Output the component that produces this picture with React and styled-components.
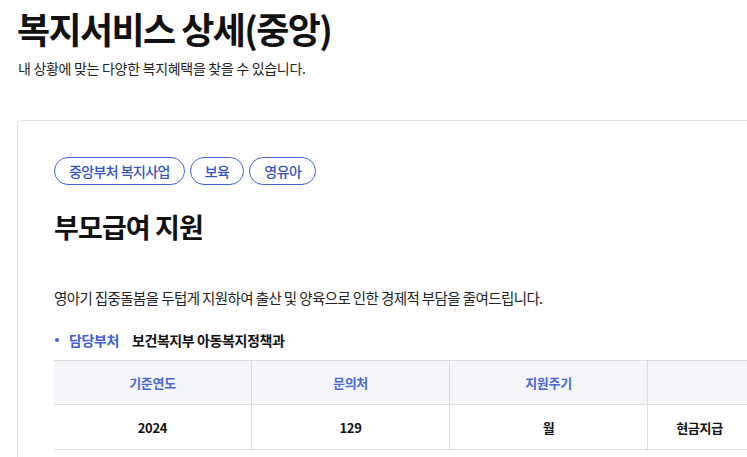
import React from "react";
import styled, { createGlobalStyle } from "styled-components";

const GlobalStyle = createGlobalStyle`
  body {
    margin: 0;
    background: #fff;
    font-family: "Noto Sans CJK KR", "Noto Sans", sans-serif;
    color: #111;
    overflow: hidden;
  }
`;

const Page = styled.main`
  padding: 4px 0 0 17px;
  width: 900px;
`;

const Title = styled.h1`
  margin: 0;
  font-size: 36px;
  font-weight: 700;
  line-height: 48px;
  letter-spacing: -1.6px;
`;

const Sub = styled.p`
  margin: 6px 0 0 1px;
  font-size: 14px;
  line-height: 20px;
  color: #222;
  letter-spacing: -0.3px;
`;

const Card = styled.section`
  margin-top: 42px;
  border: 1px solid #e0e0e0;
  border-radius: 5px;
  padding: 36px 36px 40px;
`;

const Tags = styled.div`
  display: flex;
  gap: 5px;
`;

const Tag = styled.span`
  display: inline-flex;
  align-items: center;
  height: 28px;
  padding: 0 14px;
  border: 1px solid #4263d8;
  border-radius: 14px;
  box-sizing: border-box;
  color: #3552c6;
  font-size: 14px;
  font-weight: 500;
  letter-spacing: -0.6px;
`;

const Heading = styled.h2`
  margin: 22px 0 0;
  font-size: 27px;
  font-weight: 700;
  line-height: 40px;
  letter-spacing: -0.9px;
`;

const Desc = styled.p`
  margin: 40px 0 0;
  font-size: 14.5px;
  line-height: 22px;
  color: #222;
  letter-spacing: -0.6px;
`;

const InfoRow = styled.div`
  display: flex;
  align-items: center;
  margin-top: 21px;
  font-size: 14px;
  font-weight: 600;
  line-height: 20px;
  letter-spacing: -0.4px;
`;

const Dot = styled.span`
  width: 4px;
  height: 4px;
  border-radius: 50%;
  background: #4263d8;
  margin: 0 10px 0 1px;
`;

const Label = styled.span`
  color: #3f5fd6;
  margin-right: 13px;
`;

const Value = styled.span`
  color: #111;
`;

const Table = styled.div`
  display: grid;
  grid-template-columns: 197px 198px 198px 104px 200px;
  margin-top: 10px;
  border-top: 1px solid #dcdcdc;
`;

const Cell = styled.div`
  height: ${(p) => (p.$head ? 43 : 44)}px;
  display: flex;
  align-items: center;
  justify-content: center;
  background: ${(p) => (p.$head ? "#f5f6fa" : "#fff")};
  color: ${(p) => (p.$head ? "#4a66d6" : "#111")};
  font-size: 13px;
  font-weight: 600;
  border-bottom: 1px solid #dcdcdc;
  border-left: ${(p) => (p.$first ? "none" : "1px solid #dcdcdc")};
  letter-spacing: -0.3px;
`;

const Wide = styled(Cell)`
  grid-column: span 2;
`;

export default function App() {
  const head = ["기준연도", "문의처", "지원주기"];
  const body = ["2024", "129", "월"];
  return (
    <>
      <GlobalStyle />
      <Page>
        <Title>복지서비스 상세(중앙)</Title>
        <Sub>내 상황에 맞는 다양한 복지혜택을 찾을 수 있습니다.</Sub>
        <Card>
          <Tags>
            <Tag>중앙부처 복지사업</Tag>
            <Tag>보육</Tag>
            <Tag>영유아</Tag>
          </Tags>
          <Heading>부모급여 지원</Heading>
          <Desc>
            영아기 집중돌봄을 두텁게 지원하여 출산 및 양육으로 인한 경제적 부담을 줄여드립니다.
          </Desc>
          <InfoRow>
            <Dot />
            <Label>담당부처</Label>
            <Value>보건복지부 아동복지정책과</Value>
          </InfoRow>
          <Table>
            {head.map((h, i) => (
              <Cell key={h} $head $first={i === 0}>
                {h}
              </Cell>
            ))}
            <Wide $head>지원형태</Wide>
            {body.map((b, i) => (
              <Cell key={b} $first={i === 0}>
                {b}
              </Cell>
            ))}
            <Cell>현금지급</Cell>
            <Cell />
          </Table>
        </Card>
      </Page>
    </>
  );
}
